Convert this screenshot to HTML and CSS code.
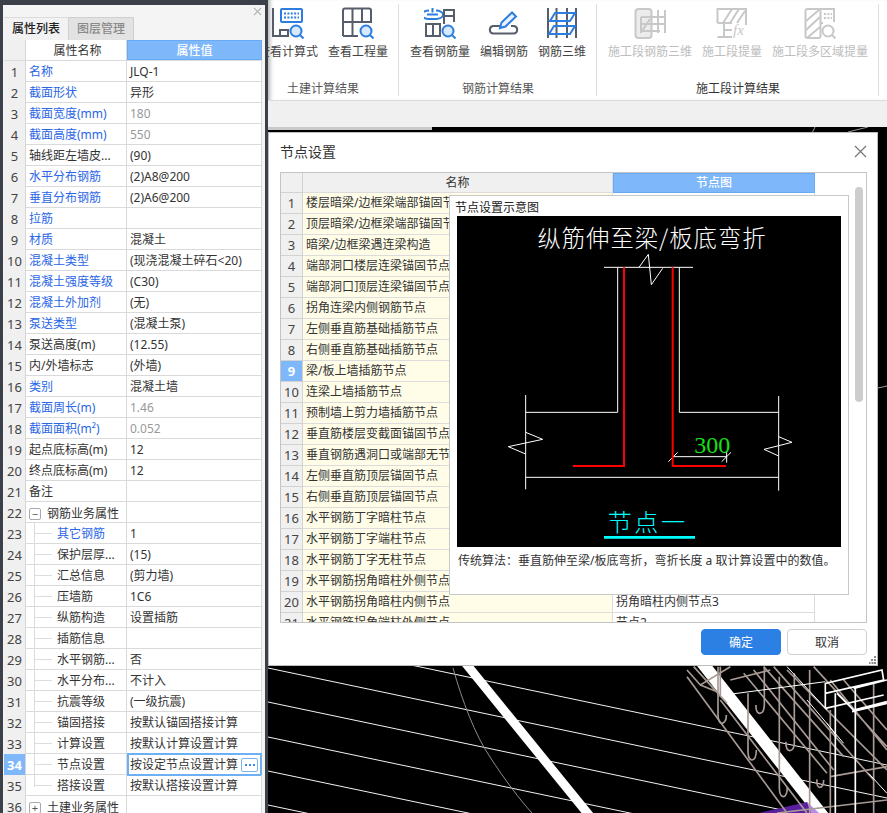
FILE: index.html
```
<!DOCTYPE html>
<html lang="zh-CN">
<head>
<meta charset="utf-8">
<title>节点设置</title>
<link rel="stylesheet" href="styles.css">
</head>
<body>
<div class="app">
  <aside class="sidebar">
    <section class="panel">
      <div class="panel-top">
        <svg class="x-small" width="9" height="9" viewBox="0 0 9 9"><path d="M1 1l7 7M8 1L1 8"/></svg>
      </div>
      <div class="tabs"><div class="tab active">属性列表</div><div class="tab">图层管理</div></div>
      <div class="ptable">
        <div class="prow phead"><div class="pn"></div><div class="pk center">属性名称</div><div class="pv sel">属性值</div></div>
        <div class="prow"><div class="pn">1</div><div class="pk link">名称</div><div class="pv">JLQ-1</div></div>
        <div class="prow"><div class="pn">2</div><div class="pk link">截面形状</div><div class="pv">异形</div></div>
        <div class="prow"><div class="pn">3</div><div class="pk link">截面宽度(mm)</div><div class="pv muted">180</div></div>
        <div class="prow"><div class="pn">4</div><div class="pk link">截面高度(mm)</div><div class="pv muted">550</div></div>
        <div class="prow"><div class="pn">5</div><div class="pk">轴线距左墙皮...</div><div class="pv">(90)</div></div>
        <div class="prow"><div class="pn">6</div><div class="pk link">水平分布钢筋</div><div class="pv">(2)A8@200</div></div>
        <div class="prow"><div class="pn">7</div><div class="pk link">垂直分布钢筋</div><div class="pv">(2)A6@200</div></div>
        <div class="prow"><div class="pn">8</div><div class="pk link">拉筋</div><div class="pv"></div></div>
        <div class="prow"><div class="pn">9</div><div class="pk link">材质</div><div class="pv">混凝土</div></div>
        <div class="prow"><div class="pn">10</div><div class="pk link">混凝土类型</div><div class="pv">(现浇混凝土碎石&lt;20)</div></div>
        <div class="prow"><div class="pn">11</div><div class="pk link">混凝土强度等级</div><div class="pv">(C30)</div></div>
        <div class="prow"><div class="pn">12</div><div class="pk link">混凝土外加剂</div><div class="pv">(无)</div></div>
        <div class="prow"><div class="pn">13</div><div class="pk link">泵送类型</div><div class="pv">(混凝土泵)</div></div>
        <div class="prow"><div class="pn">14</div><div class="pk">泵送高度(m)</div><div class="pv">(12.55)</div></div>
        <div class="prow"><div class="pn">15</div><div class="pk">内/外墙标志</div><div class="pv">(外墙)</div></div>
        <div class="prow"><div class="pn">16</div><div class="pk link">类别</div><div class="pv">混凝土墙</div></div>
        <div class="prow"><div class="pn">17</div><div class="pk link">截面周长(m)</div><div class="pv muted">1.46</div></div>
        <div class="prow"><div class="pn">18</div><div class="pk link">截面面积(m²)</div><div class="pv muted">0.052</div></div>
        <div class="prow"><div class="pn">19</div><div class="pk">起点底标高(m)</div><div class="pv">12</div></div>
        <div class="prow"><div class="pn">20</div><div class="pk">终点底标高(m)</div><div class="pv">12</div></div>
        <div class="prow"><div class="pn">21</div><div class="pk">备注</div><div class="pv"></div></div>
        <div class="prow"><div class="pn">22</div><div class="pk group-key"><span class="toggle">−</span>钢筋业务属性</div><div class="pv"></div></div>
        <div class="prow"><div class="pn">23</div><div class="pk tree link">其它钢筋</div><div class="pv">1</div></div>
        <div class="prow"><div class="pn">24</div><div class="pk tree">保护层厚...</div><div class="pv">(15)</div></div>
        <div class="prow"><div class="pn">25</div><div class="pk tree">汇总信息</div><div class="pv">(剪力墙)</div></div>
        <div class="prow"><div class="pn">26</div><div class="pk tree">压墙筋</div><div class="pv">1C6</div></div>
        <div class="prow"><div class="pn">27</div><div class="pk tree">纵筋构造</div><div class="pv">设置插筋</div></div>
        <div class="prow"><div class="pn">28</div><div class="pk tree">插筋信息</div><div class="pv"></div></div>
        <div class="prow"><div class="pn">29</div><div class="pk tree">水平钢筋...</div><div class="pv">否</div></div>
        <div class="prow"><div class="pn">30</div><div class="pk tree">水平分布...</div><div class="pv">不计入</div></div>
        <div class="prow"><div class="pn">31</div><div class="pk tree">抗震等级</div><div class="pv">(一级抗震)</div></div>
        <div class="prow"><div class="pn">32</div><div class="pk tree">锚固搭接</div><div class="pv">按默认锚固搭接计算</div></div>
        <div class="prow"><div class="pn">33</div><div class="pk tree">计算设置</div><div class="pv">按默认计算设置计算</div></div>
        <div class="prow"><div class="pn sel">34</div><div class="pk tree">节点设置</div><div class="pv editing"><span>按设定节点设置计算</span><span class="more"><i></i><i></i><i></i></span></div></div>
        <div class="prow"><div class="pn">35</div><div class="pk tree tree-end">搭接设置</div><div class="pv">按默认搭接设置计算</div></div>
        <div class="prow"><div class="pn">36</div><div class="pk group-key"><span class="toggle">+</span>土建业务属性</div><div class="pv"></div></div>
      </div>
    </section>
  </aside>

  <main class="work">
    <header class="ribbon">
      <section class="rgroup first">
        <div class="rbtns">
          <div class="rbtn w5">
            <svg class="icon" viewBox="0 0 32 32"><path class="g" d="M1 1V29H16V23H8V29"/><rect class="b" x="9" y="2" width="21" height="13" rx="1"/><path class="b dots" d="M12 6.500H27M12 10.500H27"/><circle class="lens" cx="24" cy="24" r="5.500"/><path class="b" d="M28 28l3.500 3.500"/></svg>
            <span>查看计算式</span>
          </div>
          <div class="rbtn w5">
            <svg class="icon" viewBox="0 0 32 32"><path class="g" d="M1 29V3.500Q1 1.500 3 1.500H27Q29 1.500 29 3.500V16M1 15H29M10.500 1.500V29M20 1.500V15M1 29H16"/><circle class="lens" cx="24" cy="24" r="5.500"/><path class="b" d="M28 28l3.500 3.500"/></svg>
            <span>查看工程量</span>
          </div>
        </div>
        <div class="rlabel">土建计算结果</div>
      </section>
      <section class="rgroup">
        <div class="rbtns">
          <div class="rbtn w5">
            <svg class="icon" viewBox="0 0 32 32"><path class="b" d="M5 3.500A5 3 0 0 0 5 12H12A5 3 0 0 0 12 3.500M3 7.500H14M8.500 1V5.500"/><path class="g" d="M20 17V3H30V15M20 9H30M2 17H16V29H2ZM9 17V29"/><circle class="lens" cx="24" cy="24" r="5.500"/><path class="b" d="M28 28l3.500 3.500"/></svg>
            <span>查看钢筋量</span>
          </div>
          <div class="rbtn w4">
            <svg class="icon" viewBox="0 0 32 32"><path class="g" d="M12 19H5A3.800 3.800 0 0 0 5 26.500H26A3.800 3.800 0 0 0 26 19H23"/><path class="b pencil" d="M12 21L13.500 15.500L24 5.500L28 9.500L17.500 19.500Z"/></svg>
            <span>编辑钢筋</span>
          </div>
          <div class="rbtn w4">
            <svg class="icon" viewBox="0 0 32 32"><path class="g" d="M2 1V31M10.500 1V31M21 1V31M30 1V31"/><path class="b" d="M4 14L9 6H29L24 14ZM3 27L8 19H29L24 27Z"/></svg>
            <span>钢筋三维</span>
          </div>
        </div>
        <div class="rlabel">钢筋计算结果</div>
      </section>
      <section class="rgroup off">
        <div class="rbtns">
          <div class="rbtn w7">
            <svg class="icon" viewBox="0 0 32 32"><rect class="d tint" x="1.500" y="2" width="16" height="29" rx="3"/><path class="d" d="M7 10V26M7 10H31M7 17H31M7 24H26M24 3V26M31 3V26M8 24L16 12"/></svg>
            <span>施工段钢筋三维</span>
          </div>
          <div class="rbtn w5">
            <svg class="icon" viewBox="0 0 32 32"><path class="d" d="M1.500 16V2H30V18M1.500 16H16M7 16L16 2M14 16L23 2M21 16L29 4M8 16V30M1.500 30H16M8 23H16"/><text class="fx" x="17" y="28">fx</text></svg>
            <span>施工段提量</span>
          </div>
          <div class="rbtn w8">
            <svg class="icon" viewBox="0 0 32 32"><rect class="d" x="1.500" y="2" width="15" height="29" rx="2"/><path class="d" d="M2 14L15 3M2 23L16 10M3 31L16 20M16 2H30V15M16 16H19"/><path class="d dots" d="M20 7H28M20 11H28"/><circle class="d" cx="24" cy="24" r="5.500"/><path class="d" d="M28 28l3.500 3.500"/></svg>
            <span>施工段多区域提量</span>
          </div>
        </div>
        <div class="rlabel dark">施工段计算结果</div>
      </section>
    </header>
    <div class="strip"></div>
    <div class="scene">
      <svg class="scene-art" viewBox="268 127 619 686" width="619" height="686">
        <rect x="268" y="127" width="164" height="3" fill="#c9c9c9"/>
        <path class="thin" d="M812 133L815 127M848 132L868 127M878 388L887 386"/>
        <g class="bgline">
          <path d="M268 635L887 765M268 668L887 798M268 702L887 832M268 737L887 867M268 771L887 901M268 805L887 935"/>
        </g>
        <path class="curve" d="M453 668C462 700 475 735 490 757C505 780 520 800 532 813"/>
        <path class="band" d="M463 660L593 820"/>
        <path class="band wide" d="M700 660L826 820"/>
        <path class="violet" d="M759 813L807 802L815 813Z"/>
        <path class="violet-l" d="M807 802L819 813H811Z"/>
        <g transform="translate(687 660) scale(0.3333)">
          <g class="wire">
            <path d="M0 50L300 459M20 20L120 130M100 120L360 459M170 40L420 340M200 30L440 330M300 30L600 330M260 20L560 360M430 60L600 270M380 20L600 260M230 20L470 290M430 350L600 320M270 459L600 420M470 60L600 210"/>
            <path d="M0 30L40 75L130 20M130 60L250 30M40 75L90 95"/>
            <path d="M93 20V165Q94 190 105 190Q118 188 118 165"/>
            <path d="M100 20V110"/>
            <path d="M183 100V275Q184 300 195 300Q208 298 208 270"/>
            <path d="M232 20V135Q231 160 218 160Q206 158 207 135"/>
            <path d="M277 50V385Q278 410 289 410Q301 408 301 380"/>
            <path d="M322 40V250Q321 272 308 272Q296 270 297 245"/>
            <path d="M368 30V459M410 360Q410 382 398 382Q388 380 390 358M430 150V459M560 70V459"/>
          </g>
          <g class="wire-w">
            <path d="M135 102L415 65M300 20L420 150M360 120L470 250M420 190L450 230M545 340L600 400"/>
          </g>
          <g class="wire-t">
            <path d="M415 145V70L585 30L590 60L415 100M415 145L590 105M445 100V459M505 85V459M495 155L600 130M450 100L500 150L600 125M500 85L600 60"/>
          </g>
        </g>
      </svg>
    </div>
  </main>

  <div class="dialog">
    <div class="dtitle">
      <span>节点设置</span>
      <svg class="x-large" width="13" height="13" viewBox="0 0 13 13"><path d="M1 1l11 11M12 1L1 12"/></svg>
    </div>
    <div class="dbox">
      <div class="drow dhead"><div class="dn"></div><div class="dk">名称</div><div class="dv sel">节点图</div></div>
      <div class="drow"><div class="dn">1</div><div class="dk">楼层暗梁/边框梁端部锚固节点</div><div class="dv"></div></div>
      <div class="drow"><div class="dn">2</div><div class="dk">顶层暗梁/边框梁端部锚固节点</div><div class="dv"></div></div>
      <div class="drow"><div class="dn">3</div><div class="dk">暗梁/边框梁遇连梁构造</div><div class="dv"></div></div>
      <div class="drow"><div class="dn">4</div><div class="dk">端部洞口楼层连梁锚固节点</div><div class="dv"></div></div>
      <div class="drow"><div class="dn">5</div><div class="dk">端部洞口顶层连梁锚固节点</div><div class="dv"></div></div>
      <div class="drow"><div class="dn">6</div><div class="dk">拐角连梁内侧钢筋节点</div><div class="dv"></div></div>
      <div class="drow"><div class="dn">7</div><div class="dk">左侧垂直筋基础插筋节点</div><div class="dv"></div></div>
      <div class="drow"><div class="dn">8</div><div class="dk">右侧垂直筋基础插筋节点</div><div class="dv"></div></div>
      <div class="drow"><div class="dn sel">9</div><div class="dk">梁/板上墙插筋节点</div><div class="dv"></div></div>
      <div class="drow"><div class="dn">10</div><div class="dk">连梁上墙插筋节点</div><div class="dv"></div></div>
      <div class="drow"><div class="dn">11</div><div class="dk">预制墙上剪力墙插筋节点</div><div class="dv"></div></div>
      <div class="drow"><div class="dn">12</div><div class="dk">垂直筋楼层变截面锚固节点</div><div class="dv"></div></div>
      <div class="drow"><div class="dn">13</div><div class="dk">垂直钢筋遇洞口或端部无节点</div><div class="dv"></div></div>
      <div class="drow"><div class="dn">14</div><div class="dk">左侧垂直筋顶层锚固节点</div><div class="dv"></div></div>
      <div class="drow"><div class="dn">15</div><div class="dk">右侧垂直筋顶层锚固节点</div><div class="dv"></div></div>
      <div class="drow"><div class="dn">16</div><div class="dk">水平钢筋丁字暗柱节点</div><div class="dv"></div></div>
      <div class="drow"><div class="dn">17</div><div class="dk">水平钢筋丁字端柱节点</div><div class="dv"></div></div>
      <div class="drow"><div class="dn">18</div><div class="dk">水平钢筋丁字无柱节点</div><div class="dv"></div></div>
      <div class="drow"><div class="dn">19</div><div class="dk">水平钢筋拐角暗柱外侧节点</div><div class="dv"></div></div>
      <div class="drow"><div class="dn">20</div><div class="dk">水平钢筋拐角暗柱内侧节点</div><div class="dv">拐角暗柱内侧节点3</div></div>
      <div class="drow"><div class="dn">21</div><div class="dk">水平钢筋拐角端柱外侧节点</div><div class="dv">节点2</div></div>

      <div class="thumb"></div>

      <div class="preview">
        <div class="preview-title">节点设置示意图</div>
        <svg class="drawing" viewBox="21 18 1152 993" width="384" height="331">
          <rect x="21" y="18" width="1152" height="993" fill="#000"/>
          <text class="t-title" x="606" y="112">纵筋伸至梁/板底弯折</text>
          <g class="ln">
            <path d="M462 172H729M567 172L595 133L604 224L638 175M503 172V607H227M688 172V607H986"/>
            <path d="M227 555V838M986 558V842M227 802H986"/>
            <path d="M227 667L278 688L175 710L227 732M986 680L1026 697L942 718L986 738"/>
            <path d="M668 740H830M655 755L683 727M815 755L843 727M830 725V758"/>
          </g>
          <path class="rebar" d="M522 172V768H369M668 172V768H828"/>
          <text class="t-dim" x="733" y="728">300</text>
          <text class="t-node" x="473" y="962">节点一</text>
          <path class="node-line" d="M462 982H735"/>
        </svg>
        <div class="caption">传统算法：垂直筋伸至梁/板底弯折，弯折长度 a 取计算设置中的数值。</div>
      </div>
    </div>
    <div class="dfoot">
      <button class="btn primary">确定</button>
      <button class="btn">取消</button>
    </div>
    <svg class="grip" width="8" height="8" viewBox="0 0 8 8"><path d="M5 0h2v2H5zM2 3h2v2H2zM5 3h2v2H5zM0 6h1.500v2H0zM2.500 6h2v2h-2zM5 6h2v2H5z"/></svg>
  </div>
</div>
</body>
</html>
```

FILE: styles.css
```
* { box-sizing: border-box; }
html, body { margin: 0; padding: 0; }
body {
  width: 887px;
  height: 813px;
  overflow: hidden;
  font: 12px/16px "Noto Sans", "Noto Sans CJK SC", sans-serif;
  color: #333;
  background: #3c4049;
}
.app { position: relative; display: flex; width: 887px; height: 813px; overflow: hidden; }

/* properties panel */
.sidebar { flex: 0 0 268px; padding: 5px 3px 0; }
.panel { width: 262px; height: 808px; background: #f4f4f4; overflow: hidden; padding-left: 1px; }
.panel-top { height: 12px; display: flex; justify-content: flex-end; align-items: center; padding-right: 3px; }
.x-small path { stroke: #b5b5b5; stroke-width: 1.2; fill: none; }
.tabs { display: flex; height: 23px; }
.tab { width: 65px; text-align: center; line-height: 22px; background: #e2e2e2; color: #8a8a8a; border: 1px solid #cfcfcf; border-bottom: 0; border-left: 0; font-weight: 500; }
.tab.active { width: 65px; background: #f2f2f2; color: #222; border-top: 1px solid #dcdcdc; }
.ptable { width: 258px; background: #fff; }
.prow { display: grid; grid-template-columns: 22px 101px 135px; height: 21px; line-height: 22px; border-bottom: 1px solid #dadada; }
.pn { background: #f0f0f0; border-right: 1px solid #d6d6d6; text-align: center; font-size: 13px; color: #444; }
.pn.sel { background: #7eb8fa; color: #fff; font-weight: 700; }
.pk { padding-left: 3px; border-right: 1px solid #dadada; white-space: nowrap; overflow: hidden; position: relative; }
.pk.center { text-align: center; }
.pv { padding-left: 3px; border-right: 1px solid #dadada; white-space: nowrap; overflow: hidden; }
.pv.sel { background: #7eb8fa; color: #fff; text-align: center; font-weight: 500; border: 1px solid #69aaf5; padding: 0; line-height: 20px; }
.link { color: #2a66e6; }
.muted { color: #999; }
.group-key { padding: 1px 0 0 3px; display: flex; align-items: center; line-height: 20px; }
.toggle { width: 12px; height: 12px; margin-right: 6px; border: 1px solid #aaa; border-radius: 2px; font-size: 11px; line-height: 9px; text-align: center; color: #555; background: #fff; }
.tree { padding-left: 31px; }
.tree::before { content: ""; position: absolute; left: 8px; top: -1px; bottom: -1px; width: 1px; background: #dcdcdc; }
.tree::after { content: ""; position: absolute; left: 9px; top: 10px; width: 17px; height: 1px; background: #dcdcdc; }
.tree-end::before { bottom: 10px; }
.pv.editing { display: flex; align-items: center; justify-content: space-between; border: 2px solid #6eb0f5; padding: 1px 2px 0 1px; margin: -1px 0 -1px; height: 23px; line-height: 20px; }
.more { display: flex; gap: 2px; align-items: center; justify-content: center; width: 17px; height: 14px; border: 1px solid #7ab3f0; border-radius: 2px; }
.more i { width: 2px; height: 2px; background: #3b86e6; }

/* ribbon */
.work { flex: 0 0 619px; display: flex; flex-direction: column; height: 813px; }
.ribbon { display: flex; height: 101px; padding-top: 4px; background: #fff; border-bottom: 1px solid #dcdcdc; overflow: hidden; box-shadow: inset 5px 0 4px -3px #b5b5b5; }
.rgroup { flex: none; height: 92px; padding: 3px 10px 0 11px; border-right: 1px solid #dedede; display: flex; flex-direction: column; }
.rgroup.first { margin-left: -21px; }
.rbtns { display: flex; gap: 10px; }
.rbtn { display: flex; flex-direction: column; align-items: center; gap: 5px; white-space: nowrap; color: #444; }
.w4 { width: 48px; } .w5 { width: 60px; } .w7 { width: 84px; } .w8 { width: 96px; }
.off .rbtn { color: #bdbdbd; }
.icon { width: 32px; height: 32px; display: block; }
.icon path, .icon rect, .icon circle { fill: none; stroke-width: 2; }
.icon .g { stroke: #575e6b; }
.icon .b { stroke: #2b7de0; }
.icon .d { stroke: #c8c8c8; }
.icon .tint { fill: #ececec; }
.icon .dots { stroke-dasharray: 2 1.400; }
.icon .lens { fill: #d8e9fb; stroke: #2b7de0; }
.icon .pencil { fill: #eaf3fd; }
.fx { font: italic 15px "Liberation Serif", serif; fill: #c8c8c8; }
.rlabel { margin-top: auto; line-height: 14px; text-align: center; color: #555; }
.rlabel.dark { color: #333; }
.strip { height: 26px; flex: none; background: #f0f0f0; }
.scene { flex: 1; background: #000; overflow: hidden; }
.scene-art { display: block; }
.scene-art path { fill: none; }
.thin { stroke: #9a9a9a; stroke-width: 1; }
.bgline path { stroke: #f2f2f2; stroke-width: 1; }
.curve { stroke: #8c8c8c; stroke-width: 1; }
.band { stroke: #fff; stroke-width: 9; }
.band.wide { stroke-width: 12; }
.scene-art .violet { fill: #5a1f9e; }
.scene-art .violet-l { fill: #b88be6; }
.wire path { stroke: #a89a94; stroke-width: 5; }
.wire-w path { stroke: #fff; stroke-width: 3; }
.wire-t path { stroke: #fff; stroke-width: 5; }

/* dialog */
.dialog { position: absolute; left: 268px; top: 132px; width: 610px; height: 534px; background: #fff; border: 1px solid #bdbdbd; }
.dtitle { height: 39px; padding: 0 10px 2px 11px; display: flex; justify-content: space-between; align-items: center; font-size: 14px; color: #333; }
.x-large path { stroke: #777; stroke-width: 1.200; fill: none; }
.dbox { position: relative; width: 587px; height: 451px; margin-left: 11px; border: 1px solid #c4c4c4; overflow: hidden; background: #fff; }
.drow { display: grid; grid-template-columns: 22px 310px 202px; width: 534px; height: 21px; line-height: 20px; }
.drow.dhead { height: 20px; line-height: 20px; }
.dn { background: #f0f0f0; border-right: 1px solid #d2d2d2; border-bottom: 1px solid #d2d2d2; text-align: center; font-size: 13px; color: #444; }
.dn.sel { background: #7eb8fa; color: #fff; font-weight: 700; }
.dk { padding-left: 3px; background: #fffde8; border-right: 1px solid #dcdcdc; border-bottom: 1px solid #dcdcdc; white-space: nowrap; overflow: hidden; }
.dv { padding-left: 3px; border-right: 1px solid #dcdcdc; border-bottom: 1px solid #dcdcdc; white-space: nowrap; overflow: hidden; }
.dhead .dk { background: #f0f0f0; text-align: center; padding: 0; }
.dhead .dv.sel { background: #7eb8fa; color: #fff; text-align: center; font-weight: 500; padding: 0; border: 1px solid #69aaf5; line-height: 18px; }
.thumb { position: absolute; left: 574px; top: 14px; width: 8px; height: 215px; border-radius: 4px; background: #cdcdcd; }
.preview { position: absolute; left: 168px; top: 22px; width: 400px; height: 400px; background: #fff; border: 1px solid #c8c8c8; }
.preview-title { height: 20px; line-height: 24px; padding-left: 5px; color: #222; }
.drawing { display: block; margin-left: 7px; }
.caption { margin: 6px 0 0 8px; color: #333; white-space: nowrap; }
.t-title { font: 300 70px "Noto Sans CJK SC", sans-serif; fill: #fff; text-anchor: middle; letter-spacing: 3px; }
.t-dim { font: 72px "Liberation Serif", serif; fill: #14e014; }
.t-node { font: 300 72px "Noto Sans CJK SC", sans-serif; fill: #00ffff; letter-spacing: 8px; }
.ln path { fill: none; stroke: #fff; stroke-width: 3; }
.rebar { fill: none; stroke: #f00; stroke-width: 6; }
.node-line { fill: none; stroke: #00ffff; stroke-width: 8; }
.dfoot { display: flex; justify-content: flex-end; gap: 6px; margin-top: 6px; padding-right: 10px; }
.btn { width: 80px; height: 26px; padding: 0; font: 12px "Noto Sans", "Noto Sans CJK SC", sans-serif; color: #333; background: #fff; border: 1px solid #d0d0d0; border-radius: 4px; }
.btn.primary { background: #2c80e4; color: #fff; border-color: #2c80e4; }
.grip { position: absolute; right: 0; bottom: 1px; }
.grip path { fill: #8a8a8a; }
```
